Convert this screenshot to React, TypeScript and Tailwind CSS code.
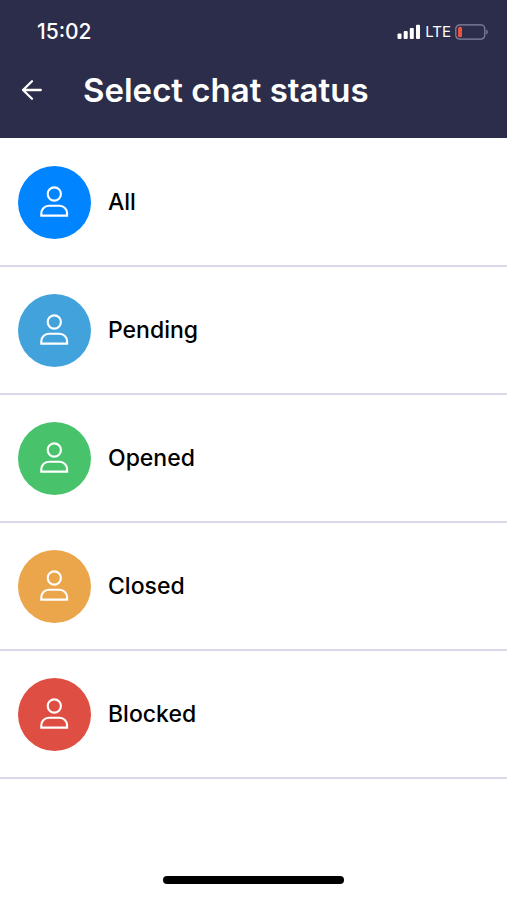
interface ChatStatus {
  label: string;
  color: string;
}

const statuses: ChatStatus[] = [
  { label: "All", color: "bg-[#0084ff]" },
  { label: "Pending", color: "bg-[#42a3dc]" },
  { label: "Opened", color: "bg-[#49c26c]" },
  { label: "Closed", color: "bg-[#eba54b]" },
  { label: "Blocked", color: "bg-[#de4e42]" },
];

function SignalIcon() {
  return (
    <svg width="24" height="16" viewBox="0 0 24 16" fill="currentColor" aria-hidden="true">
      <rect x="0.5" y="9.5" width="4" height="5.5" rx="1" />
      <rect x="6.7" y="7" width="4" height="8" rx="1" />
      <rect x="12.8" y="4" width="4" height="11" rx="1" />
      <rect x="19" y="0.8" width="4" height="14.2" rx="1" />
    </svg>
  );
}

function BatteryIcon() {
  return (
    <svg width="34" height="16" viewBox="0 0 34 16" fill="none" aria-hidden="true">
      <rect x="0.8" y="0.8" width="29" height="14.4" rx="4" stroke="#8486a0" strokeWidth="1.2" />
      <path d="M31.3 5.5c1.9.8 1.9 4.2 0 5z" fill="#8486a0" />
      <rect x="3" y="2.8" width="4" height="10.4" rx="1.5" fill="#e9533f" />
    </svg>
  );
}

function BackIcon() {
  return (
    <svg
      width="22"
      height="22"
      viewBox="0 0 22 22"
      fill="none"
      stroke="currentColor"
      strokeWidth="2.3"
      strokeLinecap="round"
      strokeLinejoin="round"
      aria-hidden="true"
    >
      <path d="M19.8 11H2M11 2.2 2 11l9 8.8" />
    </svg>
  );
}

function PersonIcon() {
  return (
    <svg
      width="31"
      height="34"
      viewBox="0 0 31 34"
      fill="none"
      stroke="currentColor"
      strokeWidth="2.1"
      aria-hidden="true"
    >
      <circle cx="15.3" cy="9" r="6.6" />
      <path d="M2.3 30.6v-2.4a7.5 7.5 0 0 1 7.5-7.5h10.8a7.5 7.5 0 0 1 7.5 7.5v2.4z" />
    </svg>
  );
}

function StatusRow({ label, color }: ChatStatus) {
  return (
    <li>
      <button
        type="button"
        className="flex h-32 w-full items-center gap-[17px] border-b-2 border-[#d9d9ea] px-[18px] text-left"
      >
        <span className={`flex size-[73px] shrink-0 items-center justify-center rounded-full text-white ${color}`}>
          <PersonIcon />
        </span>
        <span className="text-[23px] leading-8 font-medium text-black">{label}</span>
      </button>
    </li>
  );
}

export default function App() {
  return (
    <div className="flex min-h-screen flex-col bg-white font-['Inter','Liberation_Sans',sans-serif]">
      <header className="bg-[#2b2d4a] text-white">
        <div className="flex items-center justify-between pt-4 pr-[18px] pl-[37px]">
          <span className="text-[21px] leading-8 font-medium">15:02</span>
          <div className="flex items-center gap-1">
            <SignalIcon />
            <span className="text-[15px] leading-8">LTE</span>
            <BatteryIcon />
          </div>
        </div>
        <div className="flex items-center gap-10 px-[21px] pt-[22px] pb-7">
          <button type="button" aria-label="Back">
            <BackIcon />
          </button>
          <h1 className="text-[33px] leading-10 font-semibold">Select chat status</h1>
        </div>
      </header>

      <main className="flex-1 pt-px">
        <ul>
          {statuses.map((status) => (
            <StatusRow key={status.label} {...status} />
          ))}
        </ul>
      </main>

      <div className="flex justify-center pb-4">
        <div className="h-2 w-[181px] rounded-full bg-black" />
      </div>
    </div>
  );
}
